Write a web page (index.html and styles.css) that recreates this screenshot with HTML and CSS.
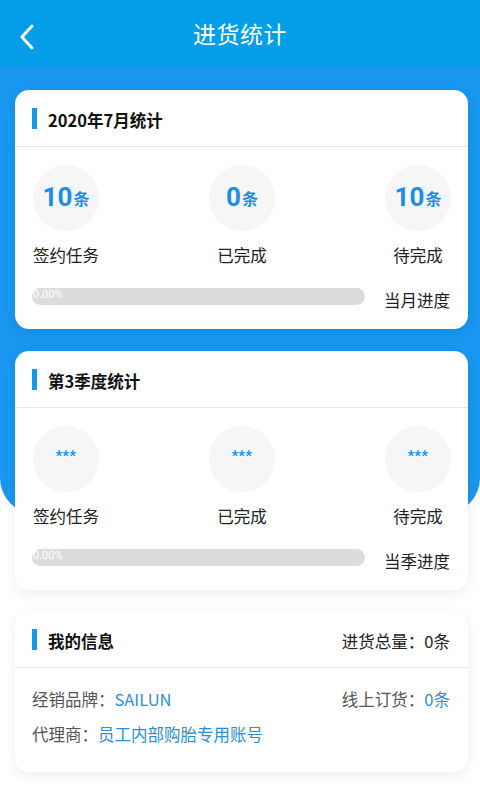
FILE: index.html
```html
<!DOCTYPE html>
<html lang="zh-CN">
<head>
<meta charset="utf-8">
<title>进货统计</title>
<link rel="stylesheet" href="styles.css">
</head>
<body>
<header class="topbar">
  <span class="back">
    <svg width="16" height="26" viewBox="0 0 16 26"><path d="M13 2 L3 13 L13 24" fill="none" stroke="#fff" stroke-width="3" stroke-linecap="round" stroke-linejoin="round"/></svg>
  </span>
  <h1 class="title">进货统计</h1>
</header>
<main class="content">
  <section class="card">
    <div class="card-head"><span class="bar"></span><span class="card-title">2020年7月统计</span></div>
    <div class="stats">
      <div class="stat"><div class="circle"><span class="num">10</span><span class="unit">条</span></div><div class="label">签约任务</div></div>
      <div class="stat"><div class="circle"><span class="num">0</span><span class="unit">条</span></div><div class="label">已完成</div></div>
      <div class="stat"><div class="circle"><span class="num">10</span><span class="unit">条</span></div><div class="label">待完成</div></div>
    </div>
    <div class="progress-row">
      <div class="track"><span class="pct">0.00%</span></div>
      <span class="progress-label">当月进度</span>
    </div>
  </section>
  <section class="card">
    <div class="card-head"><span class="bar"></span><span class="card-title">第3季度统计</span></div>
    <div class="stats">
      <div class="stat"><div class="circle"><span class="stars">***</span></div><div class="label">签约任务</div></div>
      <div class="stat"><div class="circle"><span class="stars">***</span></div><div class="label">已完成</div></div>
      <div class="stat"><div class="circle"><span class="stars">***</span></div><div class="label">待完成</div></div>
    </div>
    <div class="progress-row">
      <div class="track"><span class="pct">0.00%</span></div>
      <span class="progress-label">当季进度</span>
    </div>
  </section>
  <section class="card info">
    <div class="card-head"><span class="bar"></span><span class="card-title">我的信息</span><span class="head-right">进货总量：0条</span></div>
    <div class="info-body">
      <div class="info-row"><span>经销品牌：<em>SAILUN</em></span><span>线上订货：<em>0条</em></span></div>
      <div class="info-row"><span>代理商：<em>员工内部购胎专用账号</em></span></div>
    </div>
  </section>
</main>
</body>
</html>
```

FILE: styles.css
```css
* { box-sizing: border-box; }
html, body { margin: 0; padding: 0; }
body {
  width: 480px;
  min-height: 800px;
  background: #fff;
  font-family: "Noto Sans CJK SC", "Roboto", sans-serif;
  color: #222;
}
.topbar {
  height: 66px;
  background: #049de8;
  display: flex;
  align-items: center;
  justify-content: center;
  position: relative;
}
.back {
  position: absolute;
  left: 19px;
  top: 24px;
  display: flex;
}
.title {
  margin: 0;
  font-size: 23px;
  font-weight: 400;
  color: #fff;
  letter-spacing: 0.5px;
}
.content {
  position: relative;
  padding: 24px 12px 20px 15px;
  display: flex;
  flex-direction: column;
  gap: 22px;
}
.content::before {
  content: "";
  position: absolute;
  left: 0;
  top: 0;
  width: 100%;
  height: 448px;
  background: #1896f0;
  border-radius: 0 0 36px 36px;
  z-index: 0;
}
.card {
  position: relative;
  z-index: 1;
  background: #fff;
  border-radius: 14px;
  box-shadow: 0 4px 14px rgba(0,0,0,0.07);
}
.card-head {
  height: 57px;
  display: flex;
  align-items: center;
  padding: 3px 18px 0 17px;
  border-bottom: 1px solid #e6e6e6;
}
.info .card-head { height: 56px; }
.bar {
  width: 5px;
  height: 21px;
  background: #1896f0;
  margin-right: 11px;
  margin-top: -3px;
}
.card-title {
  font-size: 16.5px;
  font-weight: 700;
  color: #111;
}
.head-right {
  margin-left: auto;
  font-size: 16.5px;
  color: #222;
}
.stats {
  display: flex;
  justify-content: space-between;
  padding: 18px 17px 0 18px;
}
.stat {
  display: flex;
  flex-direction: column;
  align-items: center;
  width: 66px;
}
.circle {
  width: 66px;
  height: 66px;
  border-radius: 50%;
  background: #f6f6f6;
  display: flex;
  align-items: center;
  justify-content: center;
  color: #1a8fe6;
  padding-bottom: 3px;
}
.num {
  font-family: "Roboto", sans-serif;
  font-weight: 700;
  font-size: 26px;
}
.unit {
  font-weight: 700;
  font-size: 16px;
  margin-left: 1px;
  margin-top: 2px;
}
.stars {
  font-family: "Roboto", sans-serif;
  font-weight: 700;
  font-size: 14px;
  letter-spacing: 0.5px;
  margin-top: -4px;
}
.label {
  margin-top: 12px;
  font-size: 16.5px;
  white-space: nowrap;
  line-height: 24px;
}
.progress-row {
  display: flex;
  align-items: flex-start;
  padding: 21px 18px 17px 17px;
}
.track {
  width: 333px;
  height: 17px;
  background: #dcdcdc;
  border-radius: 9px;
  display: flex;
  align-items: center;
}
.pct {
  font-family: "Roboto", sans-serif;
  font-size: 11px;
  color: #fff;
  margin-left: 1px;
  margin-top: -4px;
}
.progress-label {
  margin-left: auto;
  font-size: 16.5px;
  line-height: 24px;
}
.info-body {
  padding: 19px 18px 25px 17px;
  display: flex;
  flex-direction: column;
  gap: 10px;
}
.info-row {
  display: flex;
  justify-content: space-between;
  font-size: 16.5px;
  color: #555;
  line-height: 25px;
}
.info-row em {
  font-style: normal;
  color: #2b90d9;
}
```
